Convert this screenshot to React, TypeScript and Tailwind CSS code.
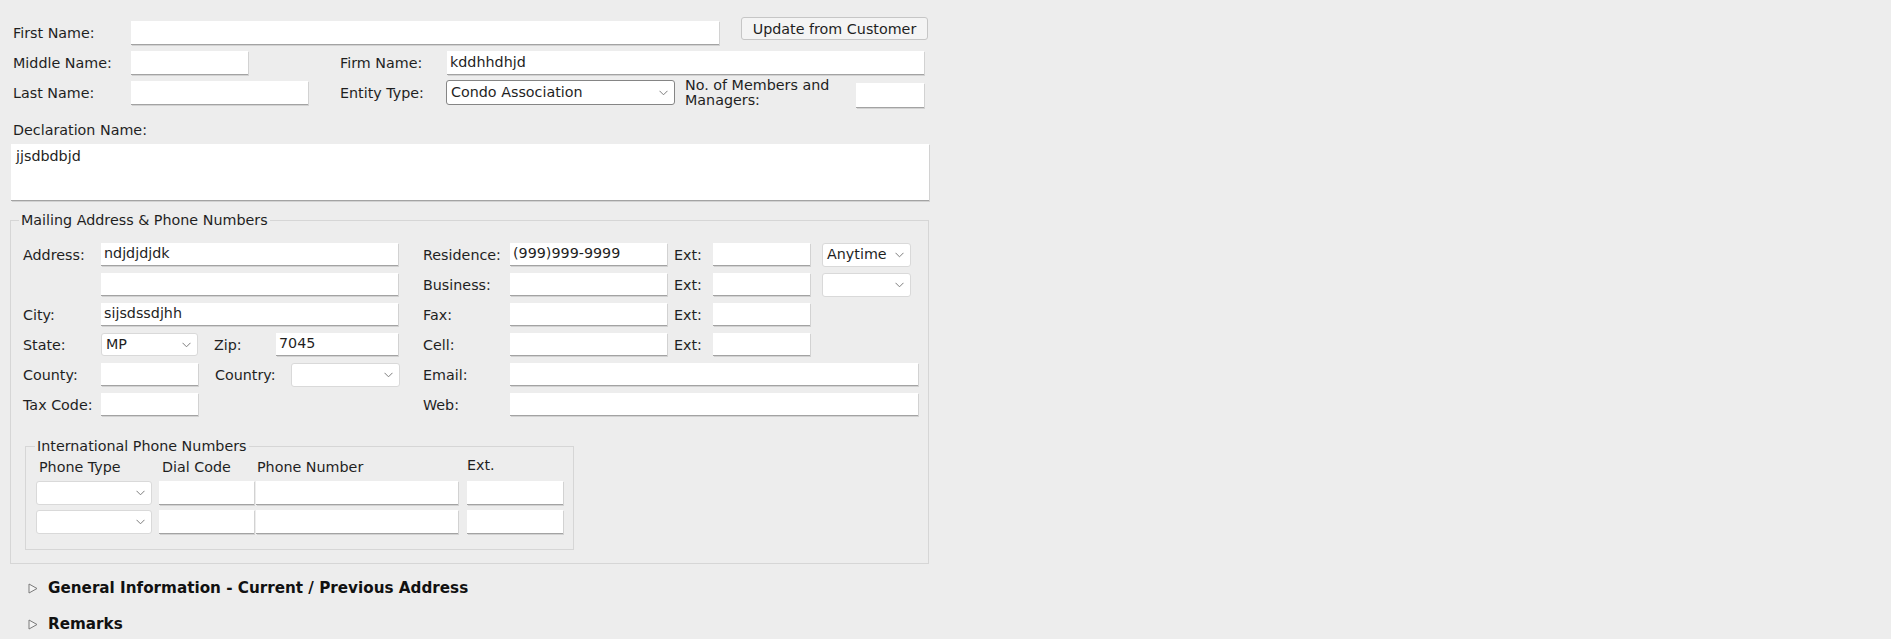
import React from "react";

function Label({ children, className = "" }: { children: React.ReactNode; className?: string }) {
  return <span className={"shrink-0 whitespace-nowrap leading-[16px] " + className}>{children}</span>;
}

function Input({ value = "", className = "" }: { value?: string; className?: string }) {
  return (
    <div
      className={
        "shrink-0 bg-white border-b border-[#a3a3a3] shadow-[1px_1px_0_#d2d2d2] px-[3px] flex items-center overflow-hidden whitespace-nowrap " +
        className
      }
    >
      {value}
    </div>
  );
}

function Chevron() {
  return (
    <svg width="9" height="6" viewBox="0 0 9 6" className="shrink-0">
      <path d="M0.5 0.8 L4.5 4.8 L8.5 0.8" fill="none" stroke="#7d7d7d" strokeWidth="1" />
    </svg>
  );
}

function Select({ value = "", className = "" }: { value?: string; className?: string }) {
  return (
    <div
      className={
        "shrink-0 bg-white border rounded-[3px] flex items-center justify-between pl-[4px] pr-[6px] whitespace-nowrap " +
        className
      }
    >
      <span>{value}</span>
      <Chevron />
    </div>
  );
}

function Triangle() {
  return (
    <svg width="10" height="11" viewBox="0 0 10 11" className="shrink-0">
      <polygon points="1,1 9,5.5 1,10" fill="#f4f4f4" stroke="#7a7a7a" strokeWidth="1" />
    </svg>
  );
}

export default function App() {
  return (
    <div className="min-h-[639px] bg-[#ededed] font-['DejaVu_Sans',Verdana,sans-serif] text-[14.3px] text-[#1f1f1f]">
      <div className="w-[940px] pl-[11px] pt-[17px]">
        {/* Row 1 */}
        <div className="flex items-start">
          <div className="flex items-center mt-[4px]">
            <Label className="w-[120px] pl-[2px]">First Name:</Label>
            <Input className="w-[588px] h-[24px]" />
          </div>
          <button className="ml-[22px] w-[187px] h-[23px] bg-[#f4f4f4] border border-[#c6c6c6] rounded-[3px] leading-[16px] text-[#1f1f1f]">
            Update from Customer
          </button>
        </div>

        {/* Row 2 */}
        <div className="flex items-center h-[24px] mt-[6px]">
          <Label className="w-[120px] pl-[2px]">Middle Name:</Label>
          <Input className="w-[117px] h-[24px]" />
          <Label className="ml-[92px] w-[107px]">Firm Name:</Label>
          <Input className="w-[477px] h-[24px]" value="kddhhdhjd" />
        </div>

        {/* Row 3 */}
        <div className="flex items-start h-[28px] mt-[5px]">
          <div className="flex items-center h-[24px] mt-[1px]">
            <Label className="w-[120px] pl-[2px]">Last Name:</Label>
            <Input className="w-[177px] h-[24px]" />
          </div>
          <div className="flex items-center h-[25px] ml-[32px]">
            <Label className="w-[106px]">Entity Type:</Label>
            <Select className="w-[229px] h-[25px] border-[#858585]" value="Condo Association" />
          </div>
          <div className="ml-[10px] w-[171px] leading-[15px] -mt-[2px]">
            No. of Members and
            <br />
            Managers:
          </div>
          <Input className="w-[68px] h-[25px] mt-[3px]" />
        </div>

        {/* Declaration */}
        <div className="mt-[12px] leading-[20px] pl-[2px]">Declaration Name:</div>
        <div className="mt-[4px] w-[918px] h-[57px] bg-white border-b border-[#a3a3a3] shadow-[1px_1px_0_#d2d2d2] pl-[5px] pt-[4px] leading-[16px]">
          jjsdbdbjd
        </div>

        {/* Mailing fieldset */}
        <fieldset className="mt-[11px] -ml-[1px] w-[919px] border border-[#d6d6d6] pl-[8px] pb-[13px]">
          <legend className="px-[2px] leading-[16px]">Mailing Address &amp; Phone Numbers</legend>
          <div className="flex mt-[15px]">
            {/* left column */}
            <div className="w-[404px] pl-[4px] flex flex-col gap-[7px]">
              <div className="flex items-center h-[23px]">
                <Label className="w-[78px]">Address:</Label>
                <Input className="w-[297px] h-[23px]" value="ndjdjdjdk" />
              </div>
              <div className="flex items-center h-[23px]">
                <Input className="ml-[78px] w-[297px] h-[23px]" />
              </div>
              <div className="flex items-center h-[23px]">
                <Label className="w-[78px]">City:</Label>
                <Input className="w-[297px] h-[23px]" value="sijsdssdjhh" />
              </div>
              <div className="flex items-center h-[23px]">
                <Label className="w-[78px]">State:</Label>
                <Select className="w-[97px] h-[23px] border-[#d9d9d9]" value="MP" />
                <Label className="ml-[16px] w-[62px]">Zip:</Label>
                <Input className="w-[122px] h-[23px]" value="7045" />
              </div>
              <div className="flex items-center h-[23px]">
                <Label className="w-[78px]">County:</Label>
                <Input className="w-[97px] h-[23px]" />
                <Label className="ml-[17px] w-[76px]">Country:</Label>
                <Select className="w-[109px] h-[24px] border-[#d9d9d9]" />
              </div>
              <div className="flex items-center h-[23px]">
                <Label className="w-[78px]">Tax Code:</Label>
                <Input className="w-[97px] h-[23px]" />
              </div>
            </div>

            {/* right column */}
            <div className="flex flex-col gap-[7px]">
              <div className="flex items-center h-[23px]">
                <Label className="w-[87px]">Residence:</Label>
                <Input className="w-[157px] h-[23px]" value="(999)999-9999" />
                <Label className="ml-[7px] w-[39px]">Ext:</Label>
                <Input className="w-[97px] h-[23px]" />
                <Select className="ml-[12px] w-[89px] h-[24px] border-[#d9d9d9]" value="Anytime" />
              </div>
              <div className="flex items-center h-[23px]">
                <Label className="w-[87px]">Business:</Label>
                <Input className="w-[157px] h-[23px]" />
                <Label className="ml-[7px] w-[39px]">Ext:</Label>
                <Input className="w-[97px] h-[23px]" />
                <Select className="ml-[12px] w-[89px] h-[24px] border-[#d9d9d9]" />
              </div>
              <div className="flex items-center h-[23px]">
                <Label className="w-[87px]">Fax:</Label>
                <Input className="w-[157px] h-[23px]" />
                <Label className="ml-[7px] w-[39px]">Ext:</Label>
                <Input className="w-[97px] h-[23px]" />
              </div>
              <div className="flex items-center h-[23px]">
                <Label className="w-[87px]">Cell:</Label>
                <Input className="w-[157px] h-[23px]" />
                <Label className="ml-[7px] w-[39px]">Ext:</Label>
                <Input className="w-[97px] h-[23px]" />
              </div>
              <div className="flex items-center h-[23px]">
                <Label className="w-[87px]">Email:</Label>
                <Input className="w-[408px] h-[23px]" />
              </div>
              <div className="flex items-center h-[23px]">
                <Label className="w-[87px]">Web:</Label>
                <Input className="w-[408px] h-[23px]" />
              </div>
            </div>
          </div>

          {/* International fieldset */}
          <fieldset className="mt-[22px] ml-[6px] w-[549px] border border-[#d6d6d6] pl-[9px] pr-[10px] pb-[15px]">
            <legend className="px-[2px] leading-[16px]">International Phone Numbers</legend>
            <div className="flex items-center h-[16px] mt-[5px] leading-[16px]">
              <span className="ml-[4px] w-[123px]">Phone Type</span>
              <span className="w-[95px]">Dial Code</span>
              <span className="w-[210px]">Phone Number</span>
              <span className="-mt-[4px]">Ext.</span>
            </div>
            <div className="flex items-center mt-[6px]">
              <Select className="ml-[1px] w-[116px] h-[24px] border-[#d9d9d9]" />
              <Input className="ml-[7px] w-[95px] h-[24px]" />
              <Input className="ml-[2px] w-[202px] h-[24px]" />
              <Input className="ml-[9px] w-[96px] h-[24px]" />
            </div>
            <div className="flex items-center mt-[5px]">
              <Select className="ml-[1px] w-[116px] h-[24px] border-[#d9d9d9]" />
              <Input className="ml-[7px] w-[95px] h-[24px]" />
              <Input className="ml-[2px] w-[202px] h-[24px]" />
              <Input className="ml-[9px] w-[96px] h-[24px]" />
            </div>
          </fieldset>
        </fieldset>

        {/* Disclosures */}
        <div className="flex items-center h-[20px] mt-[14px] pl-[17px]">
          <Triangle />
          <span className="ml-[10px] font-bold text-[15.2px] text-[#111]">General Information - Current / Previous Address</span>
        </div>
        <div className="flex items-center h-[20px] mt-[16px] pl-[17px]">
          <Triangle />
          <span className="ml-[10px] font-bold text-[15.2px] text-[#111]">Remarks</span>
        </div>
      </div>
    </div>
  );
}
